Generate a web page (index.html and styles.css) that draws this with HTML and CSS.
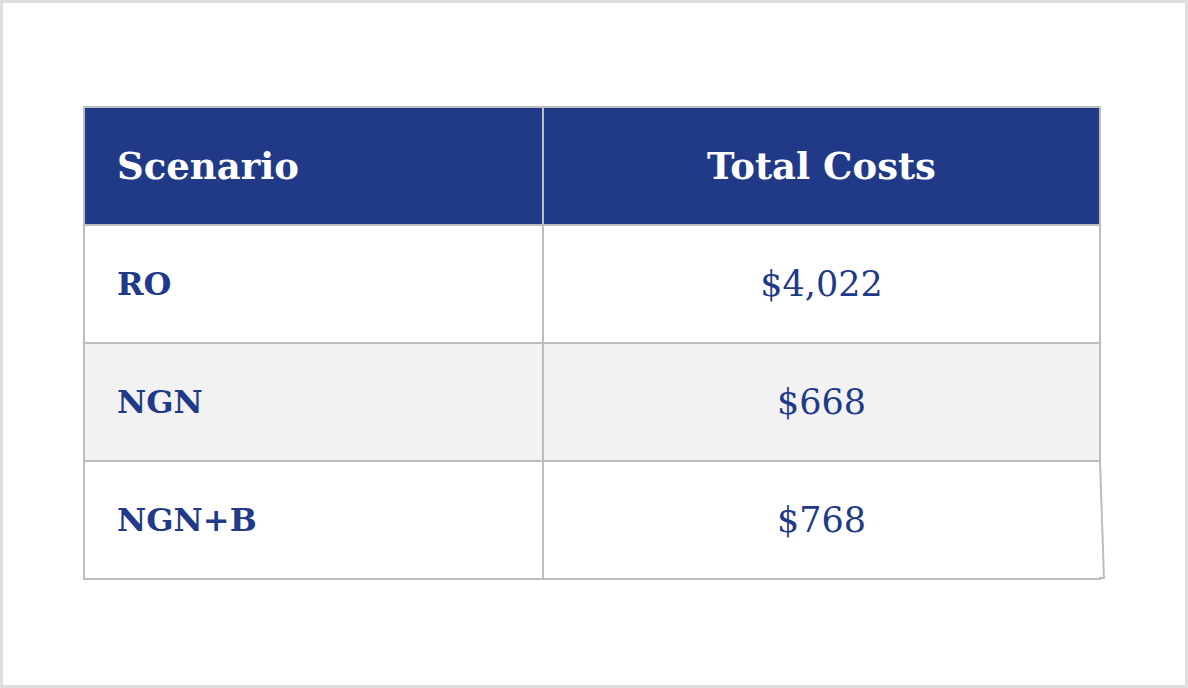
FILE: index.html
```html
<!DOCTYPE html>
<html>
<head>
<meta charset="utf-8">
<link rel="stylesheet" href="styles.css">
</head>
<body>
<div class="frame">
  <table class="costs">
    <thead>
      <tr>
        <th class="c1">Scenario</th>
        <th class="c2">Total Costs</th>
      </tr>
    </thead>
    <tbody>
      <tr>
        <td class="c1">RO</td>
        <td class="c2">$4,022</td>
      </tr>
      <tr class="alt">
        <td class="c1">NGN</td>
        <td class="c2">$668</td>
      </tr>
      <tr>
        <td class="c1">NGN+B</td>
        <td class="c2 last">$768</td>
      </tr>
    </tbody>
  </table>
</div>
</body>
</html>
```
FILE: styles.css
```css
html, body {
  margin: 0;
  padding: 0;
  background: #ffffff;
}
.frame {
  box-sizing: border-box;
  width: 1188px;
  height: 688px;
  border: 3px solid #dedede;
  padding: 103px 0 0 80px;
  font-family: "DejaVu Serif", "Liberation Serif", serif;
}
.costs {
  border-collapse: collapse;
  width: 1018px;
  color: #213a87;
}
.costs th, .costs td {
  border: 2px solid #bdbdbd;
  height: 118px;
  padding: 0 0 0 32px;
  box-sizing: border-box;
}
.costs th {
  background: #213a87;
  color: #ffffff;
  font-size: 37px;
  font-weight: bold;
  text-align: left;
}
.costs th.c2 {
  text-align: center;
  padding: 0;
}
.costs td.c1 {
  width: 459px;
  font-weight: bold;
  font-size: 32px;
}
.costs td.c2 {
  text-align: center;
  font-size: 35px;
  padding: 0;
}
.costs tr.alt td {
  background: #f2f2f2;
}
.costs td.last {
  position: relative;
  border-right-color: transparent;
}
.costs td.last::after {
  content: "";
  position: absolute;
  top: -1px;
  bottom: -1px;
  right: -2px;
  width: 0;
  border-right: 2px solid #bdbdbd;
  transform: skewX(1.94deg);
  transform-origin: top left;
}
.costs td.last::before {
  content: "";
  position: absolute;
  bottom: -1px;
  right: -6px;
  width: 6px;
  height: 2px;
  background: #bdbdbd;
}
```
